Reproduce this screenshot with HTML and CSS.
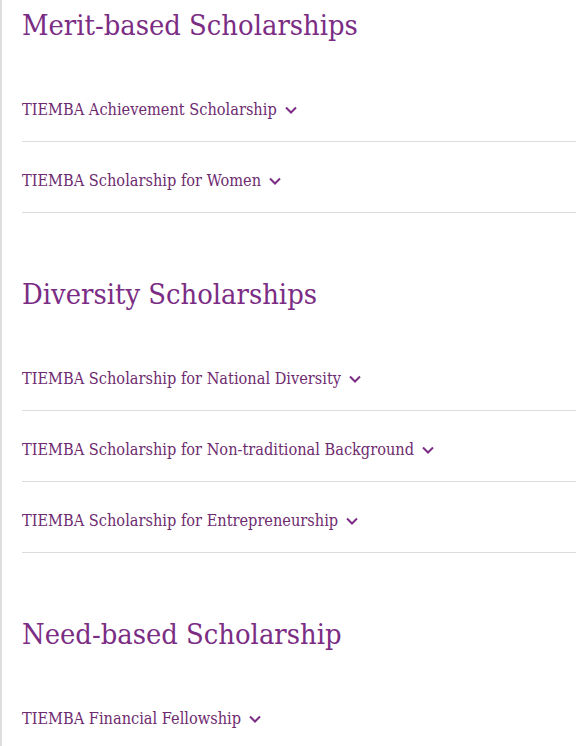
FILE: index.html
```html
<!DOCTYPE html>
<html lang="en">
<head>
<meta charset="utf-8">
<title>Scholarships</title>
<link rel="stylesheet" href="styles.css">
</head>
<body>
<main class="page">
  <section class="group">
    <h2 class="group-title">Merit-based Scholarships</h2>
    <ul class="list">
      <li class="item"><span class="item-label">TIEMBA Achievement Scholarship</span><svg class="chev" viewBox="0 0 12 8" width="12" height="8"><path d="M1 1.5 L6 6.5 L11 1.5" /></svg></li>
      <li class="item"><span class="item-label">TIEMBA Scholarship for Women</span><svg class="chev" viewBox="0 0 12 8" width="12" height="8"><path d="M1 1.5 L6 6.5 L11 1.5" /></svg></li>
    </ul>
  </section>
  <section class="group">
    <h2 class="group-title">Diversity Scholarships</h2>
    <ul class="list">
      <li class="item"><span class="item-label">TIEMBA Scholarship for National Diversity</span><svg class="chev" viewBox="0 0 12 8" width="12" height="8"><path d="M1 1.5 L6 6.5 L11 1.5" /></svg></li>
      <li class="item"><span class="item-label">TIEMBA Scholarship for Non-traditional Background</span><svg class="chev" viewBox="0 0 12 8" width="12" height="8"><path d="M1 1.5 L6 6.5 L11 1.5" /></svg></li>
      <li class="item"><span class="item-label">TIEMBA Scholarship for Entrepreneurship</span><svg class="chev" viewBox="0 0 12 8" width="12" height="8"><path d="M1 1.5 L6 6.5 L11 1.5" /></svg></li>
    </ul>
  </section>
  <section class="group">
    <h2 class="group-title">Need-based Scholarship</h2>
    <ul class="list">
      <li class="item"><span class="item-label">TIEMBA Financial Fellowship</span><svg class="chev" viewBox="0 0 12 8" width="12" height="8"><path d="M1 1.5 L6 6.5 L11 1.5" /></svg></li>
    </ul>
  </section>
</main>
</body>
</html>
```

FILE: styles.css
```css
html, body {
  margin: 0;
  padding: 0;
  background: #ffffff;
}
.page {
  min-height: 746px;
  box-sizing: border-box;
  border-left: 2px solid #dedede;
  padding: 7px 0 0 20px;
  font-family: "DejaVu Serif Condensed", "DejaVu Serif", "Liberation Serif", serif;
  font-stretch: condensed;
}
.group {
  margin-bottom: 63px;
}
.group:last-child {
  margin-bottom: 0;
}
.group-title {
  margin: 0 0 28px 0;
  font-size: 28.8px;
  line-height: 36px;
  font-weight: normal;
  color: #7b2d84;
}
.list {
  list-style: none;
  margin: 0;
  padding: 0;
}
.item {
  display: flex;
  align-items: center;
  gap: 8px;
  padding: 27px 0 19px 0;
  border-bottom: 1px solid #dcdcdc;
  font-size: 16.2px;
  line-height: 24px;
  color: #6e2b70;
}
.chev {
  fill: none;
  stroke: #7b2d84;
  stroke-width: 2;
}
```
